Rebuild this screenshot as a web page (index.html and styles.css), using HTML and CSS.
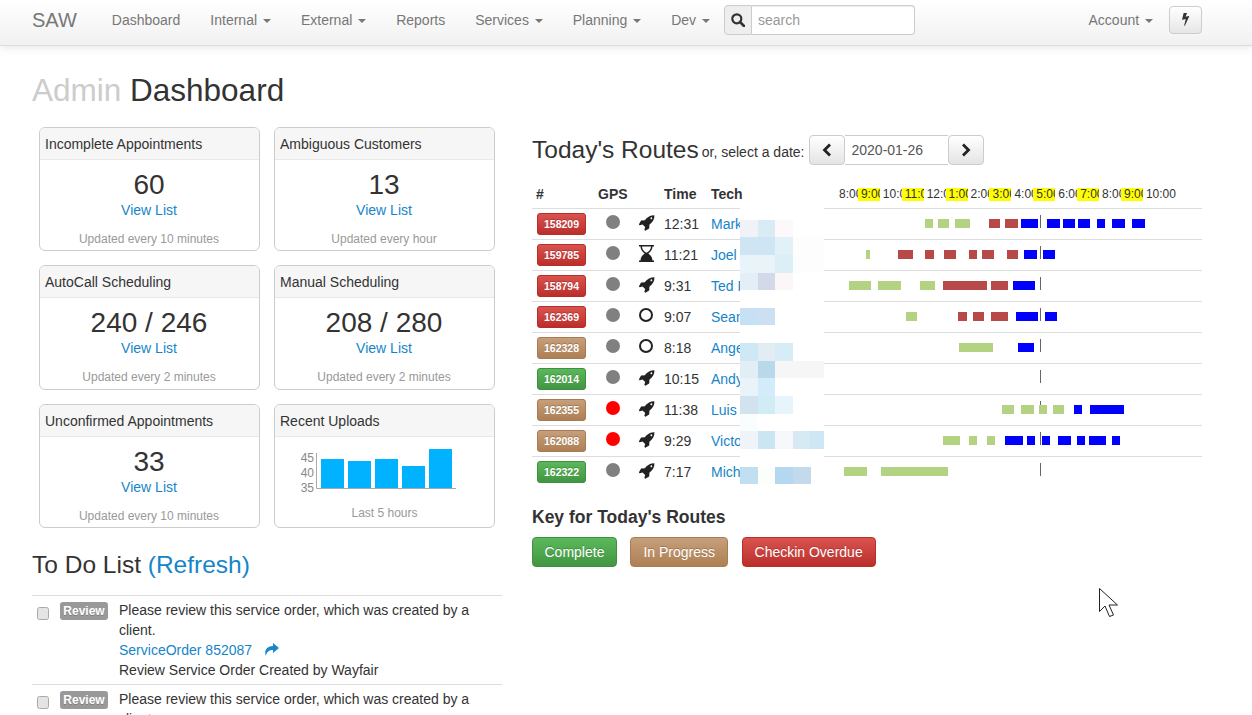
FILE: index.html
```html
<!DOCTYPE html>
<html lang="en">
<head>
<meta charset="utf-8">
<title>SAW Admin Dashboard</title>
<link rel="stylesheet" href="styles.css">
</head>
<body>
<svg class="defs" width="0" height="0" aria-hidden="true">
  <symbol id="rocket" viewBox="0 0 1792 1792"><path fill-rule="evenodd" d="M1504 448q0-40-28-68t-68-28-68 28-28 68 28 68 68 28 68-28 28-68zm224-288q0 249-75.500 430.500t-253.500 360.500q-81 80-195 176l-20 379q-2 16-16 26l-384 224q-7 4-16 4-12 0-23-9l-64-64q-13-14-8-32l85-276-281-281-276 85q-3 1-9 1-14 0-23-9l-64-64q-17-19-5-39l224-384q10-14 26-16l379-20q96-114 176-195 188-187 358-258t431-71q14 0 24 9.500t10 22.500z"/></symbol>
  <symbol id="hourglass" viewBox="0 0 15 17"><path fill-rule="evenodd" d="M0 0h15v1.500h-1.500c0 3.200-2 5.400-4.200 7 2.200 1.600 4.200 3.800 4.200 7H15V17H0v-1.500h1.500c0-3.200 2-5.400 4.200-7-2.200-1.600-4.200-3.800-4.200-7H0zM3 1.500c0 3 2 5.100 4.500 6.300C10 6.600 12 4.500 12 1.500z"/><path d="M7.500 9.500c-2 1-3.800 3-4.100 6h8.200c-.3-3-2.100-5-4.100-6z"/></symbol>
</svg>

<header class="navbar">
  <a class="brand">SAW</a>
  <a class="nav-link">Dashboard</a>
  <a class="nav-link">Internal <span class="caret"></span></a>
  <a class="nav-link">External <span class="caret"></span></a>
  <a class="nav-link">Reports</a>
  <a class="nav-link">Services <span class="caret"></span></a>
  <a class="nav-link">Planning <span class="caret"></span></a>
  <a class="nav-link">Dev <span class="caret"></span></a>
  <div class="search">
    <span class="search-addon">
      <svg width="14" height="14" viewBox="0 0 14 14"><circle cx="5.800" cy="5.800" r="4.500" fill="none" stroke="#333" stroke-width="2.200"/><path d="M9 9l4 4" stroke="#333" stroke-width="2.600" stroke-linecap="round"/></svg>
    </span>
    <input class="search-input" type="text" placeholder="search">
  </div>
  <a class="nav-link nav-account">Account <span class="caret"></span></a>
  <button class="bolt-btn" type="button" aria-label="Quick actions">
    <svg width="11" height="13" viewBox="400 170 960 1640"><path d="M1333 566q18 20 7 44l-540 1157q-13 25-42 25-4 0-14-2-17-5-25.500-19t-4.500-30l197-808-406 101q-4 1-12 1-18 0-31-11-18-15-13-39l201-825q4-14 16-23t28-9h328q19 0 32 12.500t13 29.500q0 8-5 18l-171 463 396-98q8-2 12-2 19 0 34 15z" fill="#333"/></svg>
  </button>
</header>

<main class="page">
  <h1 class="page-title"><span class="muted">Admin</span> Dashboard</h1>
  <div class="columns">
    <section class="left">
      <div class="cards">
        <article class="card">
          <h2 class="card-head">Incomplete Appointments</h2>
          <div class="card-body"><div class="metric">60</div><a class="link">View List</a><div class="note">Updated every 10 minutes</div></div>
        </article>
        <article class="card">
          <h2 class="card-head">Ambiguous Customers</h2>
          <div class="card-body"><div class="metric">13</div><a class="link">View List</a><div class="note">Updated every hour</div></div>
        </article>
        <article class="card">
          <h2 class="card-head">AutoCall Scheduling</h2>
          <div class="card-body"><div class="metric">240 / 246</div><a class="link">View List</a><div class="note">Updated every 2 minutes</div></div>
        </article>
        <article class="card">
          <h2 class="card-head">Manual Scheduling</h2>
          <div class="card-body"><div class="metric">208 / 280</div><a class="link">View List</a><div class="note">Updated every 2 minutes</div></div>
        </article>
        <article class="card">
          <h2 class="card-head">Unconfirmed Appointments</h2>
          <div class="card-body"><div class="metric">33</div><a class="link">View List</a><div class="note">Updated every 10 minutes</div></div>
        </article>
        <article class="card">
          <h2 class="card-head">Recent Uploads</h2>
          <div class="chart-body">
            <svg class="chart" width="219" height="59" viewBox="0 0 219 59">
              <g class="chart-labels" text-anchor="end">
                <text x="39" y="22">45</text>
                <text x="39" y="37">40</text>
                <text x="39" y="52">35</text>
              </g>
              <path d="M41.500 13V48.500H181" fill="none" stroke="#aaa"/>
              <g fill="#00b2ff">
                <rect x="46" y="19" width="23" height="29"/>
                <rect x="73" y="21" width="23" height="27"/>
                <rect x="100" y="19" width="23" height="29"/>
                <rect x="127" y="26" width="23" height="22"/>
                <rect x="154" y="9" width="23" height="39"/>
              </g>
            </svg>
            <div class="note">Last 5 hours</div>
          </div>
        </article>
      </div>

      <h2 class="section-title todo-title">To Do List <a class="link">(Refresh)</a></h2>
      <ul class="todo">
        <li class="todo-row">
          <input class="check" type="checkbox">
          <span class="tag">Review</span>
          <div class="todo-text">Please review this service order, which was created by a client.<br>
            <a class="link">ServiceOrder 852087</a>
            <svg class="share" width="15" height="13" viewBox="0 0 15 13"><path d="M9 0l6 5-6 5V7C5.500 7 3 8 1.800 13 .2 8 2 3.200 9 3z" fill="#1a85c8"/></svg><br>
            Review Service Order Created by Wayfair</div>
        </li>
        <li class="todo-row">
          <input class="check" type="checkbox">
          <span class="tag">Review</span>
          <div class="todo-text">Please review this service order, which was created by a client.</div>
        </li>
      </ul>
    </section>

    <section class="right">
      <div class="routes-head">
        <h2 class="section-title">Today's Routes</h2>
        <span class="routes-sub">or, select a date:</span>
        <div class="date-group">
          <button class="date-btn" type="button" aria-label="Previous"><svg width="10" height="14" viewBox="0 0 10 14"><path d="M8 1.500L2.500 7 8 12.500" fill="none" stroke="#222" stroke-width="2.800"/></svg></button>
          <input class="date-input" type="text" value="2020-01-26">
          <button class="date-btn" type="button" aria-label="Next"><svg width="10" height="14" viewBox="0 0 10 14"><path d="M2 1.500L7.500 7 2 12.500" fill="none" stroke="#222" stroke-width="2.800"/></svg></button>
        </div>
      </div>

      <div class="routes-wrap">
        <table class="routes">
          <colgroup><col class="c-id"><col class="c-gps"><col class="c-state"><col class="c-time"><col class="c-tech"><col class="c-line"></colgroup>
          <thead>
            <tr>
              <th>#</th><th>GPS</th><th></th><th>Time</th><th>Tech</th>
              <th class="hours-cell"><div class="hours"><span>8:00</span><span class="hi">9:00</span><span>10:00</span><span class="hi">11:00</span><span>12:00</span><span class="hi">1:00</span><span>2:00</span><span class="hi">3:00</span><span>4:00</span><span class="hi">5:00</span><span>6:00</span><span class="hi">7:00</span><span>8:00</span><span class="hi">9:00</span><span class="last">10:00</span></div></th>
            </tr>
          </thead>
          <tbody>
            <tr>
              <td><span class="badge red">158209</span></td><td><span class="dot"></span></td>
              <td><svg class="ico"><use href="#rocket"/></svg></td><td>12:31</td><td><a class="link">Mark</a></td>
              <td><div class="line"><i class="tick"></i>
                <i class="b g" style="left:101px;width:8px"></i><i class="b g" style="left:114px;width:11px"></i><i class="b g" style="left:131px;width:15px"></i>
                <i class="b r" style="left:165px;width:11px"></i><i class="b r" style="left:181px;width:13px"></i>
                <i class="b u" style="left:197px;width:17px"></i><i class="b u" style="left:223px;width:13px"></i><i class="b u" style="left:239px;width:12px"></i><i class="b u" style="left:254px;width:12px"></i><i class="b u" style="left:273px;width:8px"></i><i class="b u" style="left:288px;width:13px"></i><i class="b u" style="left:308px;width:13px"></i>
              </div></td>
            </tr>
            <tr>
              <td><span class="badge red">159785</span></td><td><span class="dot"></span></td>
              <td><svg class="ico"><use href="#hourglass"/></svg></td><td>11:21</td><td><a class="link">Joel</a></td>
              <td><div class="line"><i class="tick"></i>
                <i class="b g" style="left:42px;width:4px"></i>
                <i class="b r" style="left:74px;width:15px"></i><i class="b r" style="left:101px;width:9px"></i><i class="b r" style="left:120px;width:12px"></i><i class="b r" style="left:145px;width:8px"></i><i class="b r" style="left:158px;width:12px"></i><i class="b r" style="left:183px;width:11px"></i>
                <i class="b u" style="left:200px;width:13px"></i><i class="b u" style="left:219px;width:12px"></i>
              </div></td>
            </tr>
            <tr>
              <td><span class="badge red">158794</span></td><td><span class="dot"></span></td>
              <td><svg class="ico"><use href="#rocket"/></svg></td><td>9:31</td><td><a class="link">Ted R</a></td>
              <td><div class="line"><i class="tick"></i>
                <i class="b g" style="left:25px;width:22px"></i><i class="b g" style="left:54px;width:23px"></i><i class="b g" style="left:96px;width:15px"></i>
                <i class="b r" style="left:119px;width:44px"></i><i class="b r" style="left:167px;width:17px"></i>
                <i class="b u" style="left:189px;width:22px"></i>
              </div></td>
            </tr>
            <tr>
              <td><span class="badge red">162369</span></td><td><span class="dot"></span></td>
              <td><span class="ring"></span></td><td>9:07</td><td><a class="link">Sean</a></td>
              <td><div class="line"><i class="tick"></i>
                <i class="b g" style="left:82px;width:11px"></i>
                <i class="b r" style="left:134px;width:9px"></i><i class="b r" style="left:149px;width:11px"></i><i class="b r" style="left:167px;width:17px"></i>
                <i class="b u" style="left:192px;width:22px"></i><i class="b u" style="left:221px;width:12px"></i>
              </div></td>
            </tr>
            <tr>
              <td><span class="badge tan">162328</span></td><td><span class="dot"></span></td>
              <td><span class="ring"></span></td><td>8:18</td><td><a class="link">Angel</a></td>
              <td><div class="line"><i class="tick"></i>
                <i class="b g" style="left:135px;width:34px"></i>
                <i class="b u" style="left:194px;width:16px"></i>
              </div></td>
            </tr>
            <tr>
              <td><span class="badge green">162014</span></td><td><span class="dot"></span></td>
              <td><svg class="ico"><use href="#rocket"/></svg></td><td>10:15</td><td><a class="link">Andy</a></td>
              <td><div class="line"><i class="tick"></i></div></td>
            </tr>
            <tr>
              <td><span class="badge tan">162355</span></td><td><span class="dot alert"></span></td>
              <td><svg class="ico"><use href="#rocket"/></svg></td><td>11:38</td><td><a class="link">Luis J</a></td>
              <td><div class="line"><i class="tick"></i>
                <i class="b g" style="left:178px;width:12px"></i><i class="b g" style="left:197px;width:13px"></i><i class="b g" style="left:215px;width:8px"></i><i class="b g" style="left:229px;width:11px"></i>
                <i class="b u" style="left:250px;width:8px"></i><i class="b u" style="left:266px;width:34px"></i>
              </div></td>
            </tr>
            <tr>
              <td><span class="badge tan">162088</span></td><td><span class="dot alert"></span></td>
              <td><svg class="ico"><use href="#rocket"/></svg></td><td>9:29</td><td><a class="link">Victor</a></td>
              <td><div class="line"><i class="tick"></i>
                <i class="b g" style="left:119px;width:17px"></i><i class="b g" style="left:145px;width:8px"></i><i class="b g" style="left:163px;width:8px"></i>
                <i class="b u" style="left:181px;width:18px"></i><i class="b u" style="left:203px;width:8px"></i><i class="b u" style="left:218px;width:8px"></i><i class="b u" style="left:234px;width:13px"></i><i class="b u" style="left:253px;width:8px"></i><i class="b u" style="left:265px;width:17px"></i><i class="b u" style="left:288px;width:8px"></i>
              </div></td>
            </tr>
            <tr>
              <td><span class="badge green">162322</span></td><td><span class="dot"></span></td>
              <td><svg class="ico"><use href="#rocket"/></svg></td><td>7:17</td><td><a class="link">Michael</a></td>
              <td><div class="line"><i class="tick"></i>
                <i class="b g" style="left:20px;width:23px"></i><i class="b g" style="left:57px;width:67px"></i>
              </div></td>
            </tr>
          </tbody>
        </table>
        <svg class="mosaic" width="84" height="279" viewBox="0 205 84 279" aria-hidden="true">
          <rect x="0" y="205" width="84" height="279" fill="#fff"/>
          <rect x="0" y="220" width="18" height="17" fill="#f0f2f7"/><rect x="18" y="220" width="17" height="17" fill="#d9ecf6"/><rect x="35" y="220" width="18" height="17" fill="#fdf9fa"/>
          <rect x="0" y="237" width="18" height="18" fill="#cfe5f3"/><rect x="18" y="237" width="17" height="18" fill="#cfe5f3"/><rect x="35" y="237" width="18" height="18" fill="#e2f0f7"/><rect x="53" y="237" width="31" height="18" fill="#fdfdfd"/>
          <rect x="0" y="255" width="18" height="18" fill="#e9f3fa"/><rect x="18" y="255" width="17" height="18" fill="#e9f3f8"/><rect x="35" y="255" width="18" height="18" fill="#dceff7"/><rect x="53" y="255" width="31" height="18" fill="#fdfdfd"/>
          <rect x="0" y="273" width="18" height="17" fill="#e3eef6"/><rect x="18" y="273" width="17" height="17" fill="#d4d9ea"/><rect x="35" y="273" width="18" height="17" fill="#fdf6f7"/>
          <rect x="0" y="308" width="18" height="17" fill="#c6e1f4"/><rect x="18" y="308" width="17" height="17" fill="#cde0f2"/>
          <rect x="0" y="343" width="18" height="18" fill="#cfe8f5"/><rect x="18" y="343" width="17" height="18" fill="#e3ebf3"/><rect x="35" y="343" width="18" height="18" fill="#d8ecf7"/>
          <rect x="0" y="361" width="18" height="17" fill="#e1eef3"/><rect x="18" y="361" width="17" height="17" fill="#b9d9ea"/><rect x="35" y="361" width="49" height="17" fill="#f6f6f6"/>
          <rect x="0" y="378" width="18" height="18" fill="#e9f3f9"/><rect x="18" y="378" width="17" height="18" fill="#d2edf9"/>
          <rect x="0" y="396" width="18" height="18" fill="#d3e2ef"/><rect x="18" y="396" width="17" height="18" fill="#d0ecf5"/><rect x="35" y="396" width="18" height="18" fill="#e8f4fb"/>
          <rect x="0" y="414" width="18" height="17" fill="#f9fdfe"/>
          <rect x="0" y="431" width="18" height="18" fill="#eff4fb"/><rect x="18" y="431" width="17" height="18" fill="#cbe5f2"/><rect x="35" y="431" width="18" height="18" fill="#f7f8fc"/><rect x="53" y="431" width="17" height="18" fill="#d5eaf2"/><rect x="70" y="431" width="14" height="18" fill="#cfe7f5"/>
          <rect x="0" y="467" width="18" height="17" fill="#c0dff0"/><rect x="18" y="467" width="17" height="17" fill="#fcfefa"/><rect x="35" y="467" width="18" height="17" fill="#b3d8ef"/><rect x="53" y="467" width="18" height="17" fill="#c3d9ec"/>
        </svg>
      </div>

      <h3 class="key-title">Key for Today's Routes</h3>
      <div class="key">
        <span class="key-btn green">Complete</span>
        <span class="key-btn tan">In Progress</span>
        <span class="key-btn red">Checkin Overdue</span>
      </div>
    </section>
  </div>
</main>

<svg class="cursor" width="20" height="31" viewBox="0 0 20 31" aria-hidden="true"><path d="M.5.500V23.500L6 18l4.500 10.500 4-1.500L10 17h8.500z" fill="#fff" stroke="#222"/></svg>
</body>
</html>
```

FILE: styles.css
```css
* { box-sizing: border-box; }
html, body { margin: 0; height: 715px; overflow: hidden; }
body {
  font-family: "Liberation Sans", Arial, sans-serif;
  font-size: 14px;
  line-height: 20px;
  color: #333;
  background: #fff;
}
.defs { position: absolute; }
.link { color: #1585c9; text-decoration: none; }

/* navbar */
.navbar {
  display: flex;
  align-items: center;
  height: 46px;
  padding: 0 50px 0 32px;
  background: linear-gradient(#fff, #f1f1f1);
  border-bottom: 1px solid #ddd;
  box-shadow: 0 2px 8px rgba(0, 0, 0, .09);
}
.brand { font-size: 20px; color: #777; margin-right: 20px; position: relative; top: -3px; }
.nav-link { color: #777; padding: 0 15px; position: relative; top: -3px; white-space: nowrap; }
.caret {
  display: inline-block;
  width: 0; height: 0;
  margin-left: 2px;
  vertical-align: middle;
  border-top: 4px solid #777;
  border-left: 4px solid transparent;
  border-right: 4px solid transparent;
}
.search { display: flex; height: 30px; width: 191px; margin-left: -1px; position: relative; top: -3px; }
.search-addon {
  display: flex; align-items: center; justify-content: center;
  width: 28px;
  background: #eee;
  border: 1px solid #ccc;
  border-radius: 4px 0 0 4px;
}
.search-input {
  flex: 1;
  min-width: 0;
  border: 1px solid #ccc;
  border-left: 0;
  border-radius: 0 4px 4px 0;
  padding: 0 6px;
  font: 14px "Liberation Sans", Arial, sans-serif;
  color: #555;
  background: #fff;
  box-shadow: inset 0 1px 1px rgba(0, 0, 0, .075);
}
.search-input::placeholder { color: #999; opacity: 1; }
.nav-account { margin-left: auto; padding-right: 16px; }
.bolt-btn {
  display: flex; align-items: center; justify-content: center;
  width: 33px; height: 28px;
  padding: 0;
  position: relative; top: -3px;
  border: 1px solid #ccc;
  border-radius: 4px;
  background: linear-gradient(#fff, #e6e6e6);
}

/* page */
.page { padding: 0 50px 0 32px; }
.page-title { margin: 26px 0 19px; font-size: 31.500px; line-height: 36px; font-weight: 400; }
.muted { color: #ccc; }
.columns { display: grid; grid-template-columns: 470px 670px; column-gap: 30px; }

/* cards */
.cards {
  display: grid;
  grid-template-columns: 221px 221px;
  gap: 14px;
  padding: 0 7px;
}
.card {
  height: 124.4px;
  border: 1px solid #ccc;
  border-radius: 6px;
  overflow: hidden;
  background: #fff;
}
.card-head {
  margin: 0;
  height: 32px;
  padding: 6px 5px;
  font-size: 14px;
  line-height: 20px;
  font-weight: 400;
  background: #f6f6f6;
  border-bottom: 1px solid #e8e8e8;
}
.card-body { text-align: center; padding: 9px 1px 0 0; }
.metric { font-size: 28px; line-height: 32px; }
.card-body .link { display: block; line-height: 20px; margin-top: -1px; }
.note { color: #999; font-size: 12px; line-height: 18px; text-align: center; margin-top: 10px; }
.chart-body { padding-top: 3px; }
.chart { display: block; }
.chart-labels { font-size: 12px; fill: #888; }
.chart-body .note { margin-top: 5px; }

/* to do */
.section-title { margin: 0; font-size: 24.5px; line-height: 30px; font-weight: 400; }
.todo-title { margin-top: 22px; }
.todo { list-style: none; margin: 15px 0 0; padding: 0; }
.todo-row {
  display: grid;
  grid-template-columns: 28px 59px 1fr;
  padding: 4px 0;
  border-top: 1px solid #ddd;
}
.check {
  appearance: none;
  width: 12px; height: 13px;
  margin: 7px 0 0 5px;
  background: #e4e4e4;
  border: 1px solid #aaa;
  border-radius: 2.500px;
}
.tag {
  justify-self: start;
  width: 48px; height: 18px;
  margin-top: 2px;
  text-align: center;
  background: #999;
  color: #fff;
  font-size: 12px;
  font-weight: 700;
  line-height: 18px;
  border-radius: 3px;
  text-shadow: 0 1px 0 rgba(0, 0, 0, .2);
}
.todo-text { width: 383px; }
.share { margin-left: 8px; vertical-align: -1px; }

/* routes */
.routes-head { display: flex; align-items: center; height: 30px; margin-top: 8px; }
.routes-sub { margin: 4px 5px 0 3px; }
.date-group { display: flex; height: 30px; }
.date-btn {
  display: flex; align-items: center; justify-content: center;
  width: 36px;
  padding: 0;
  border: 1px solid #ccc;
  border-radius: 4px;
  background: linear-gradient(#fff, #e4e4e4);
}
.date-input {
  width: 103px;
  border: 1px solid #ccc;
  border-left: 0;
  border-right: 0;
  padding: 0 6px;
  font: 14px "Liberation Sans", Arial, sans-serif;
  color: #555;
  background: #fff;
}
.routes-wrap { position: relative; margin-top: 15px; }
.routes { width: 670px; border-collapse: collapse; table-layout: fixed; }
.c-id { width: 60px; }
.c-gps { width: 40px; }
.c-state { width: 28px; }
.c-time { width: 47px; }
.c-tech { width: 117px; }
.c-line { width: 378px; }
.routes th {
  height: 28px;
  padding: 0 0 0 4px;
  text-align: left;
  font-size: 14px;
  font-weight: 700;
  white-space: nowrap;
}
.routes th:nth-child(2) { padding-left: 6px; }
.routes td {
  height: 31px;
  padding: 0 0 0 4px;
  border-top: 1px solid #ddd;
  white-space: nowrap;
  overflow: hidden;
  vertical-align: middle;
}
.routes td:nth-child(1) { padding-left: 5px; }
.routes td:nth-child(2), .routes td:nth-child(3) { padding: 0; text-align: center; }
.routes td:nth-child(2) { padding-left: 2px; }
.routes td:last-child { padding: 0; }
.routes .hours-cell { padding: 0; font-weight: 400; font-size: 12px; }
.hours { display: flex; padding-left: 12px; position: relative; top: 1px; }
.hours span {
  flex: 0 0 21.930px;
  width: 21.930px;
  height: 13px;
  padding-left: 3px;
  line-height: 13px;
  overflow: hidden;
}
.hours .hi { background: #ff0; }
.hours .last { flex: none; overflow: visible; }
.badge {
  display: block;
  width: 49px; height: 22px;
  color: #fff;
  font-size: 10.500px;
  font-weight: 700;
  line-height: 21px;
  text-align: center;
  border-radius: 3px;
  text-shadow: 0 -1px 0 rgba(0, 0, 0, .2);
}
.red { background: linear-gradient(#d9534f, #bb2f2b); border: 1px solid #b92c28; }
.green { background: linear-gradient(#5cb85c, #419641); border: 1px solid #3e8f3e; }
.tan { background: linear-gradient(#c69f7b, #ae7f54); border: 1px solid #a87b52; }
.dot {
  display: block;
  width: 14px; height: 14px;
  margin: -3px auto 0;
  border-radius: 50%;
  background: #808080;
}
.dot.alert { background: #f00; }
.ring {
  display: block;
  width: 14px; height: 14px;
  margin: -3px auto 0;
  border: 2px solid #222;
  border-radius: 50%;
}
.ico { display: block; width: 17px; height: 17px; margin: -3px auto 0; fill: #222; }
.line { position: relative; height: 30px; }
.tick { position: absolute; left: 216px; top: 6px; width: 1px; height: 13px; background: #666; }
.b { position: absolute; top: 10px; height: 9px; }
.b.g { background: #b3d382; }
.b.r { background: #b74a48; }
.b.u { background: #00f; }
.mosaic { position: absolute; left: 208px; top: 25px; }

/* key */
.key-title { margin: 20px 0 0; font-size: 17.500px; line-height: 20px; font-weight: 700; }
.key { display: flex; gap: 13.500px; margin-top: 10px; }
.key-btn {
  height: 30px;
  padding: 0 12px;
  color: #fff;
  line-height: 28px;
  border-radius: 4px;
  text-shadow: 0 -1px 0 rgba(0, 0, 0, .2);
}
.key-btn:first-child { padding: 0 11.500px; }

.cursor { position: absolute; left: 1099px; top: 588px; }
```
